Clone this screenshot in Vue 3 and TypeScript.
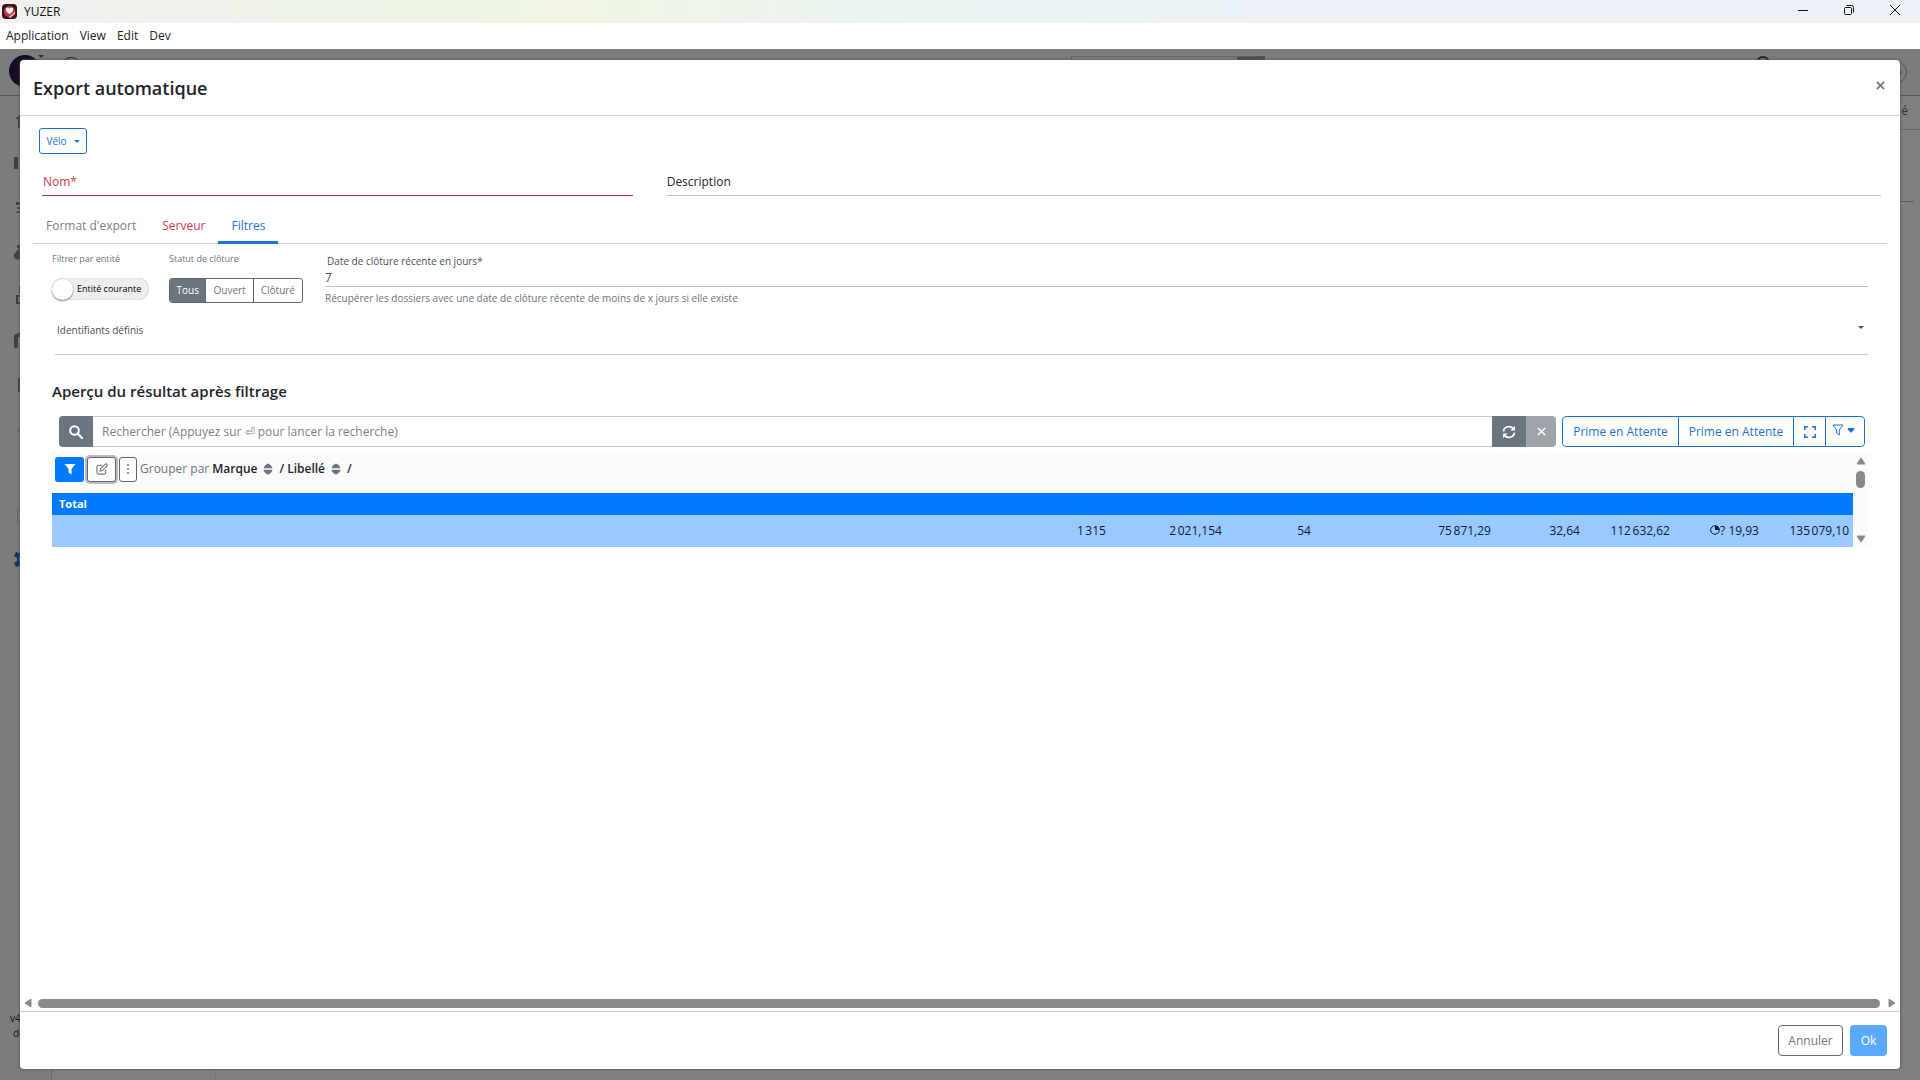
<script setup lang="ts">
import { ref } from 'vue'

const menus = ['Application', 'View', 'Edit', 'Dev']
const tabs = [
  { label: "Format d'export", state: '' },
  { label: 'Serveur', state: 'invalid' },
  { label: 'Filtres', state: 'active' },
]
const statuses = ['Tous', 'Ouvert', 'Clôturé']
const status = ref('Tous')
const currentEntity = ref(false)
const nom = ref('')
const description = ref('')
const days = ref('7')
const identifiers = ref('')
const search = ref('')
const groups = ['Marque', 'Libellé']
const totals = [
  { value: '1\u202f315', width: 116 },
  { value: '2\u202f021,154', width: 116 },
  { value: '54', width: 89 },
  { value: '75\u202f871,29', width: 180 },
  { value: '32,64', width: 89 },
  { value: '112\u202f632,62', width: 90 },
  { value: '19,93', width: 89, clock: true },
  { value: '135\u202f079,10', width: 90 },
]
const navIcons = [
  'M2 12 12 3l10 9h-3v9H5v-9z',
  'M1 6h4v12H1zM7 6h4v12H7zM13 6h8v12h-8z',
  'M3 7h10l3 4h4v3H4v-2h5l-1-2H3zM5 16h4v2H3zM14 16h6v2h-6z',
  'M4 6h9v3H9l-2 3h9l3 6h-3l-3-4H8a4 4 0 1 1-6 0l4-5H4z',
  'M6 3h9v7h-2v2h8v9H3v-9h5v-2H6zM5 14v5h3v-5z',
  'M1 8 12 3l11 5v13h-4V10H5v11H1z',
  'M8 3h8v4h4v14H5V7h3z',
  'M4 17 15 6l3 3L8 17z',
  'M10 5h8v3h-6l6 6v5H8v-3h6l-6-6z',
  'M4 4h1v15h16v1H4zM7 15l4-5 3 3 5-7 1 1-6 8-3-3-3 4z',
  'M10 2h4l1 3 3 1 3-1 2 4-3 2v3l3 2-2 4-3-1-3 2-1 3h-4l-1-3-3-2-3 1-2-4 3-2v-3L1 9l2-4 3 1 3-1zM12 9a4 4 0 1 0 0 7 4 4 0 0 0 0-7z',
]
</script>

<template>
  <div class="window">
    <header class="titlebar">
      <svg class="app-logo" viewBox="0 0 16 16" aria-hidden="true">
        <rect width="16" height="16" rx="4" fill="#3b1220" />
        <circle cx="8" cy="8" r="6" fill="#c4354a" />
        <path d="M4 5c2-2 3-1 4 0 1-1 3-2 4 0 0 3-2 4-4 6-2-2-4-3-4-6z" fill="#fff" />
        <path d="M7 14 14 8v2l-5 5z" fill="#f3b59a" />
      </svg>
      <span class="app-name">YUZER</span>
      <div class="window-controls">
        <button type="button" aria-label="Réduire">
          <svg viewBox="0 0 12 12"><path d="M1 6.500h10" /></svg>
        </button>
        <button type="button" aria-label="Restaurer">
          <svg viewBox="0 0 12 12"><rect x="1.500" y="3.500" width="7" height="7" rx="1" /><path d="M3.500 1.500h5a2 2 0 0 1 2 2v5" /></svg>
        </button>
        <button type="button" aria-label="Fermer la fenêtre">
          <svg viewBox="0 0 12 12"><path d="m1 1 10 10M11 1 1 11" /></svg>
        </button>
      </div>
    </header>
    <nav class="menubar">
      <button v-for="m in menus" :key="m" type="button">{{ m }}</button>
    </nav>

    <div class="workspace">
      <div class="backdrop" aria-hidden="true">
        <div class="topbar">
          <span class="avatar"></span>
          <span class="caret avatar-caret"></span>
          <span class="ring"></span>
          <span class="top-search"></span>
          <span class="help-ring"></span>
          <span class="next-ring">›</span>
        </div>
        <div class="shell">
          <div class="sidebar">
            <svg v-for="(d, i) in navIcons" :key="i" viewBox="0 0 24 24" :class="{ current: i === 10, faint: i === 7 || i === 9 }">
              <path :d="d" fill-rule="evenodd" />
            </svg>
            <div class="version"><span>v4</span><span>de</span></div>
          </div>
          <div class="side-panel"></div>
          <div class="page">
            <div class="page-head">é</div>
            <div class="page-line"></div>
          </div>
        </div>
      </div>

      <section class="modal" role="dialog" aria-labelledby="dialog-title">
        <header class="modal-header">
          <h1 id="dialog-title">Export automatique</h1>
          <button type="button" class="close" aria-label="Fermer">
            <svg viewBox="0 0 10 10"><path d="m1 1 8 8M9 1 1 9" /></svg>
          </button>
        </header>

        <div class="modal-body">
          <button type="button" class="outline-primary type-button">Vélo <span class="caret"></span></button>

          <div class="name-row">
            <div class="field invalid">
              <label for="nom">Nom*</label>
              <input id="nom" v-model="nom" type="text" />
            </div>
            <div class="field">
              <label for="description">Description</label>
              <input id="description" v-model="description" type="text" />
            </div>
          </div>

          <div class="tabs" role="tablist">
            <button v-for="t in tabs" :key="t.label" type="button" role="tab" :class="t.state">{{ t.label }}</button>
          </div>

          <div class="panel">
            <div class="filters">
              <div class="entity">
                <span class="small-label">Filtrer par entité</span>
                <label class="switch">
                  <input v-model="currentEntity" type="checkbox" />
                  <span class="knob"></span>
                  <span>Entité courante</span>
                </label>
              </div>
              <div class="closing">
                <span id="status-label" class="small-label">Statut de clôture</span>
                <div class="radio-group" role="radiogroup" aria-labelledby="status-label">
                  <label v-for="s in statuses" :key="s" :class="{ checked: status === s }">
                    <input v-model="status" type="radio" name="status" :value="s" />{{ s }}
                  </label>
                </div>
              </div>
              <div class="days">
                <label for="days">Date de clôture récente en jours*</label>
                <input id="days" v-model="days" type="text" />
                <small>Récupérer les dossiers avec une date de clôture récente de moins de x jours si elle existe</small>
              </div>
            </div>

            <div class="identifiers">
              <select v-model="identifiers" aria-label="Identifiants définis">
                <option value="">Identifiants définis</option>
              </select>
              <span class="caret"></span>
            </div>

            <h2>Aperçu du résultat après filtrage</h2>

            <div class="search-row">
              <div class="search-group">
                <button type="button" class="search-button" aria-label="Rechercher">
                  <svg width="14" height="14" viewBox="0 0 14 14" fill="none" stroke="#fff" stroke-width="2"><circle cx="5.500" cy="5.500" r="4.300" /><path d="m9 9 4 4" stroke-width="2.400" stroke-linecap="round" /></svg>
                </button>
                <input v-model="search" type="search" aria-label="Recherche" placeholder="Rechercher (Appuyez sur ⏎ pour lancer la recherche)" />
                <button type="button" class="refresh-button" aria-label="Actualiser">
                  <svg width="14" height="14" viewBox="0 0 14 14" fill="none" stroke="#fff" stroke-width="1.700"><path d="M1.500 6.300A5.500 5.500 0 0 1 11.500 4M12.500 7.700A5.500 5.500 0 0 1 2.500 10" /><path d="M12.900.8v4.600H8.300zM1.100 13.200V8.600h4.600z" fill="#fff" stroke="none" /></svg>
                </button>
                <button type="button" class="clear-button" aria-label="Effacer">
                  <svg width="9" height="9" viewBox="0 0 10 10" stroke="#fff" stroke-width="1.600"><path d="m1 1 8 8M9 1 1 9" /></svg>
                </button>
              </div>
              <div class="button-group">
                <button type="button" class="preset">Prime en Attente</button>
                <button type="button" class="preset">Prime en Attente</button>
                <button type="button" class="expand" aria-label="Plein écran">
                  <svg width="12" height="12" viewBox="0 0 12 12" fill="none" stroke="currentColor" stroke-width="1.500"><path d="M.8 4V.8H4M8 .8h3.200V4M11.200 8v3.200H8M4 11.200H.8V8" /></svg>
                </button>
                <button type="button" class="funnel" aria-label="Filtres enregistrés">
                  <svg width="12" height="12" viewBox="0 0 12 12" fill="none" stroke="currentColor" stroke-linejoin="round"><path d="M1 1h10L7.300 6v5L4.700 9V6z" /></svg>
                  <svg width="8" height="6" viewBox="0 0 8 6" fill="currentColor"><path d="M1.500 1h5c1 0 1.300.8.700 1.500L4.700 5.200c-.4.500-1 .5-1.400 0L.8 2.500C.2 1.800.5 1 1.500 1z" /></svg>
                </button>
              </div>
            </div>

            <div class="results">
              <div class="grid-area">
                <div class="grouping">
                  <button type="button" class="filter-button" aria-label="Filtrer">
                    <svg width="12" height="12" viewBox="0 0 12 12" fill="#fff"><path d="M.5 1h11L7.500 6v5.500L4.500 9.500V6z" /></svg>
                  </button>
                  <button type="button" class="edit-button" aria-label="Modifier">
                    <svg width="12" height="12" viewBox="0 0 13 13" fill="none" stroke="currentColor" stroke-width="1.200"><path d="M7 2.500H3a2 2 0 0 0-2 2V10a2 2 0 0 0 2 2h5.500a2 2 0 0 0 2-2V7.500" /><path d="m4.500 8.700.5-2.400L10 1.200a1 1 0 0 1 1.500 0l.4.500a1 1 0 0 1 0 1.400L7 8.200z" /></svg>
                  </button>
                  <button type="button" class="dots-button" aria-label="Plus d'options">
                    <svg width="4" height="12" viewBox="0 0 4 12" fill="#6c757d"><circle cx="2" cy="2" r="1" /><circle cx="2" cy="6" r="1" /><circle cx="2" cy="10" r="1" /></svg>
                  </button>
                  <span class="group-label">Grouper par</span>
                  <template v-for="g in groups" :key="g">
                    <b>{{ g }}</b>
                    <svg class="sort" viewBox="0 0 10 12"><path d="M.5 5.300C1 3 3 1 5 .5 7 1 9 3 9.500 5.300zM.5 6.700C1 9 3 11 5 11.500 7 11 9 9 9.500 6.700z" /></svg>
                    <b>/</b>
                  </template>
                </div>
                <table>
                  <colgroup>
                    <col />
                    <col v-for="(t, i) in totals" :key="i" :style="{ width: t.width + 'px' }" />
                  </colgroup>
                  <thead>
                    <tr><th :colspan="totals.length + 1">Total</th></tr>
                  </thead>
                  <tbody>
                    <tr>
                      <td></td>
                      <td v-for="(t, i) in totals" :key="i">
                        <template v-if="t.clock">
                          <svg class="clock" viewBox="0 0 10 10"><circle cx="5" cy="5" r="4.300" fill="none" stroke="#0b1a33" /><path d="M5 .7A4.300 4.300 0 0 1 9.300 5H5z" fill="#0b1a33" /></svg>? </template>{{ t.value }}</td>
                    </tr>
                  </tbody>
                </table>
              </div>
              <div class="v-scroll" aria-hidden="true">
                <svg viewBox="0 0 10 8"><path d="M5 1 9 7H1z" /></svg>
                <span></span>
                <svg class="end" viewBox="0 0 10 8"><path d="M5 7 9 1H1z" /></svg>
              </div>
            </div>
          </div>

          <div class="h-scroll" aria-hidden="true">
            <svg viewBox="0 0 8 10"><path d="M1 5 7 1v8z" /></svg>
            <span></span>
            <svg viewBox="0 0 8 10"><path d="M7 5 1 1v8z" /></svg>
          </div>
        </div>

        <footer class="modal-footer">
          <button type="button" class="cancel">Annuler</button>
          <button type="button" class="ok">Ok</button>
        </footer>
      </section>
    </div>
  </div>
</template>

<style>
body {
  margin: 0;
  overflow: hidden;
}
</style>

<style scoped>
* {
  box-sizing: border-box;
}
.window {
  display: flex;
  flex-direction: column;
  height: 100vh;
  font-family: 'Open Sans', 'Noto Sans', sans-serif;
  font-size: 12px;
  line-height: 20px;
  color: #212529;
  background: #fff;
}
button,
input,
select {
  margin: 0;
  padding: 0;
  border: 0;
  font: inherit;
  color: inherit;
  background: none;
  border-radius: 0;
  outline: none;
}
button {
  display: inline-flex;
  align-items: center;
  justify-content: center;
  white-space: nowrap;
}
.caret {
  display: inline-block;
  border: 3px solid transparent;
  border-top-color: currentColor;
  border-bottom: 0;
}

/* Window chrome */
.titlebar {
  display: flex;
  align-items: center;
  height: 23px;
  padding: 0 2px;
  background: linear-gradient(90deg, #f1f1f1 0, #eef4e6 20%, #f0f5e4 30%, #e9f4f3 50%, #edf2f9 70%, #edf2f9 100%);
}
.app-logo {
  width: 15px;
  height: 15px;
}
.app-name {
  flex: 1;
  padding-left: 7px;
  color: #111;
}
.window-controls {
  display: flex;
  align-self: flex-start;
}
.window-controls button {
  width: 46px;
  height: 20px;
}
.window-controls svg {
  width: 12px;
  height: 12px;
  fill: none;
  stroke: #111;
}
.menubar {
  display: flex;
  gap: 11px;
  height: 26px;
  padding-left: 6px;
  color: #222;
}

/* Dimmed application */
.workspace {
  position: relative;
  display: flex;
  flex: 1;
  min-height: 0;
  padding: 11px 20px;
  background: #7f7f7f;
}
.backdrop {
  position: absolute;
  inset: 0;
  display: flex;
  flex-direction: column;
  overflow: hidden;
  color: #333;
}
.topbar {
  display: flex;
  align-items: flex-start;
  height: 47px;
  padding-left: 9px;
  background: #7b7d7c;
  border-bottom: 1px solid #555;
}
.avatar {
  width: 32px;
  height: 32px;
  margin-top: 6px;
  border-radius: 50%;
  background: #160a26;
}
.avatar-caret {
  margin-top: 6px;
  margin-left: -3px;
}
.ring,
.help-ring {
  width: 24px;
  height: 24px;
  margin-top: 8px;
  margin-left: 15px;
  border: 1px solid #222;
  border-radius: 50%;
}
.top-search {
  width: 194px;
  height: 30px;
  margin-top: 7px;
  margin-left: auto;
  border: 1px solid #666;
  border-right: 28px solid #4b4d4f;
}
.help-ring {
  width: 14px;
  height: 14px;
  margin-top: 7px;
  margin-left: 491px;
  border: 2px solid #222;
}
.next-ring {
  width: 22px;
  height: 22px;
  margin: 12px 13px 0 115px;
  padding-right: 4px;
  border: 1px solid #555;
  border-radius: 50%;
  text-align: right;
}
.shell {
  display: flex;
  flex: 1;
}
.sidebar {
  display: flex;
  flex-direction: column;
  gap: 20px;
  width: 52px;
  padding: 11px 13px 9px;
  border-right: 1px solid #6a6a6a;
  background: #7b7d7c;
}
.sidebar svg {
  width: 24px;
  height: 24px;
  fill: #3d3f42;
}
.sidebar svg.faint {
  fill: #666;
}
.sidebar svg.current {
  fill: #0a3566;
}
.version {
  display: flex;
  flex-direction: column;
  margin: auto -3px 30px;
  font-size: 10px;
  line-height: 15px;
  color: #111;
}
.version span + span {
  padding-left: 3px;
}
.side-panel {
  width: 164px;
  border-right: 1px solid #757575;
}
.page {
  flex: 1;
}
.page-head {
  height: 34px;
  padding: 5px 12px 0;
  border-bottom: 1px solid #686868;
  text-align: right;
}
.page-line {
  height: 72px;
  margin-right: 6px;
  border-bottom: 1px solid #5c5c5c;
}

/* Dialog */
.modal {
  position: relative;
  display: flex;
  flex: 1;
  flex-direction: column;
  min-width: 0;
  background: #fff;
  border-radius: 4px;
  box-shadow: 0 0 2px 1px #5559;
}
.modal-header {
  display: flex;
  justify-content: space-between;
  height: 56px;
  padding: 16px 15px 0 13px;
  border-bottom: 1px solid #d0d3d6;
}
h1,
h2 {
  margin: 0;
  font-weight: 600;
}
h1 {
  font-size: 18px;
  line-height: 24px;
}
.close {
  width: 10px;
  height: 18px;
}
.close svg {
  width: 9px;
  height: 9px;
  stroke: #777;
  stroke-width: 2;
}
.modal-body {
  display: flex;
  flex: 1;
  flex-direction: column;
  min-height: 0;
  padding-top: 12px;
}
.outline-primary {
  border: 1px solid #1a73d0;
  border-radius: 3px;
  color: #1a73d0;
}
.type-button {
  align-self: flex-start;
  gap: 7px;
  width: 48px;
  height: 26px;
  margin-left: 19px;
  font-size: 10px;
}
.name-row {
  display: flex;
  gap: 34px;
  margin-top: 16px;
  padding: 0 19px 0 22px;
}
.field {
  position: relative;
  flex: 1215;
  height: 26px;
}
.field.invalid {
  flex: 591;
}
.field label {
  position: absolute;
  top: 2px;
  left: 0;
}
.field input {
  display: block;
  width: 100%;
  height: 26px;
  border-bottom: 1px solid #bfc2c5;
}
.field.invalid label {
  left: 1px;
  color: #d0394a;
}
.field.invalid input {
  border-color: #a8404c;
}
.tabs {
  display: flex;
  height: 34px;
  margin: 14px 13px 0;
  border-bottom: 1px solid #d0d3d6;
}
.tabs button {
  height: 34px;
  padding: 0 13px;
  border-bottom: 3px solid transparent;
  color: #7b8087;
}
.tabs button.invalid {
  color: #d0394a;
}
.tabs button.active {
  color: #1a73d0;
  border-color: #1a73d0;
}
.panel {
  padding: 7px 32px 0;
}
.filters {
  display: flex;
  height: 60px;
}
.small-label {
  display: block;
  font-size: 9px;
  line-height: 16px;
  color: #6c757d;
}
.entity {
  width: 117px;
}
.switch {
  display: flex;
  align-items: center;
  gap: 4px;
  width: 97px;
  height: 22px;
  margin-top: 11px;
  border-radius: 11px;
  background: #eee;
  box-shadow: inset 0 0 1px #999;
  font-size: 9px;
  color: #000;
  white-space: nowrap;
}
.switch input,
.radio-group input {
  position: absolute;
  opacity: 0;
}
.knob {
  width: 21px;
  height: 21px;
  border-radius: 50%;
  background: #fff;
  box-shadow: 0 1px 2px #777;
}
.closing {
  width: 156px;
}
.radio-group {
  display: flex;
  width: 134px;
  height: 25px;
  margin-top: 11px;
  border: 1px solid #5f6870;
  border-radius: 3px;
  overflow: hidden;
  font-size: 10px;
  line-height: 23px;
  color: #6c757d;
}
.radio-group label {
  flex: 47;
  text-align: center;
}
.radio-group label:first-child {
  flex: 36;
}
.radio-group label:last-child {
  flex: 49;
}
.radio-group label + label {
  border-left: 1px solid #5f6870;
}
.radio-group .checked {
  background: #6c757d;
  color: #fff;
  font-weight: 500;
}
.days {
  display: flex;
  flex: 1;
  flex-direction: column;
  font-size: 10px;
  line-height: 16px;
  color: #495057;
}
.days label {
  padding: 2px 2px 0;
}
.days input {
  height: 18px;
  border-bottom: 1px solid #bfc2c5;
  font-size: 12px;
}
.days small {
  padding-top: 3px;
  font-size: 10px;
  color: #6c757d;
}
.identifiers {
  display: flex;
  align-items: center;
  height: 44px;
  margin-left: 3px;
  padding: 0 4px 6px 2px;
  border-bottom: 1px solid #c4c7ca;
  color: #495057;
}
.identifiers select {
  flex: 1;
  height: 24px;
  appearance: none;
  font-size: 10px;
}
.identifiers .caret {
  margin-bottom: 5px;
}
h2 {
  margin-top: 25px;
  font-size: 15px;
  line-height: 22px;
}
.search-row {
  display: flex;
  gap: 6px;
  height: 31px;
  margin-top: 14px;
  padding: 0 3px 0 7px;
}
.search-group {
  display: flex;
  flex: 1;
  border-radius: 4px;
  overflow: hidden;
}
.search-group input {
  flex: 1;
  min-width: 0;
  padding: 0 9px;
  border: 1px solid #c9cccf;
  border-width: 1px 0;
  appearance: none;
}
.search-group input::placeholder {
  color: #7b8188;
  opacity: 1;
}
.search-button,
.refresh-button {
  width: 34px;
  background: #6c757d;
}
.clear-button {
  width: 30px;
  background: #9fa4aa;
}
.button-group {
  display: flex;
  border: 1px solid #1a73d0;
  border-radius: 4px;
  color: #1a73d0;
}
.button-group button + button {
  border-left: 1px solid #1a73d0;
}
.preset {
  width: 115px;
}
.expand {
  width: 32px;
}
.funnel {
  gap: 3px;
  width: 39px;
  padding: 0 4px 3px 0;
}
.results {
  display: flex;
  height: 94px;
  margin-top: 6px;
  background: #fbfbfb;
}
.grid-area {
  flex: 1;
}
.grouping {
  display: flex;
  align-items: center;
  gap: 3px;
  height: 40px;
  padding: 0 3px 8px;
  color: #212529;
}
.grouping button {
  height: 25px;
  border-radius: 3px;
}
.filter-button {
  width: 29px;
  background: #007bff;
}
.edit-button {
  width: 29px;
  border: 1px solid #5f6870;
  box-shadow: 0 0 0 2px #b9bdc1;
  color: #6c757d;
  background: #fff;
}
.dots-button {
  width: 18px;
  border: 1px solid #5f6870;
  background: #fff;
}
.group-label {
  color: #6c757d;
}
.grouping b {
  font-weight: 600;
}
.sort {
  width: 10px;
  height: 12px;
  margin: 0 3px;
  fill: #6c757d;
}
table {
  width: 100%;
  border-collapse: collapse;
  table-layout: fixed;
}
th {
  height: 22px;
  padding: 0 7px;
  background: #007bff;
  color: #fff;
  text-align: left;
  font-size: 11px;
  font-weight: 700;
}
td {
  height: 32px;
  padding: 0 4px 0 0;
  background: #99c9ff;
  color: #0b1a33;
  text-align: right;
  white-space: nowrap;
}
.clock {
  width: 10px;
  height: 10px;
}
.v-scroll {
  display: flex;
  flex-direction: column;
  align-items: center;
  gap: 6px;
  width: 15px;
  padding: 4px 0;
}
.v-scroll svg {
  width: 10px;
  height: 8px;
}
.v-scroll span {
  width: 9px;
  height: 17px;
  border-radius: 5px;
  background: #8a8a8a;
}
.v-scroll .end {
  margin-top: auto;
}
.v-scroll path,
.h-scroll path {
  fill: #8a8a8a;
  stroke: #8a8a8a;
  stroke-linejoin: round;
}
.h-scroll {
  display: flex;
  align-items: center;
  gap: 6px;
  height: 16px;
  margin-top: auto;
  padding: 0 4px;
}
.h-scroll svg {
  width: 8px;
  height: 10px;
}
.h-scroll span {
  flex: 1;
  height: 9px;
  margin-right: 2px;
  border-radius: 5px;
  background: #8a8a8a;
}
.modal-footer {
  display: flex;
  justify-content: flex-end;
  gap: 7px;
  height: 58px;
  padding: 13px 13px 0;
  border-top: 1px solid #c9cccf;
}
.modal-footer button {
  height: 31px;
  border-radius: 4px;
}
.cancel {
  width: 65px;
  border: 1px solid #5f6870;
  color: #6c757d;
}
.ok {
  width: 37px;
  background: #59aaff;
  color: #fff;
}
</style>
